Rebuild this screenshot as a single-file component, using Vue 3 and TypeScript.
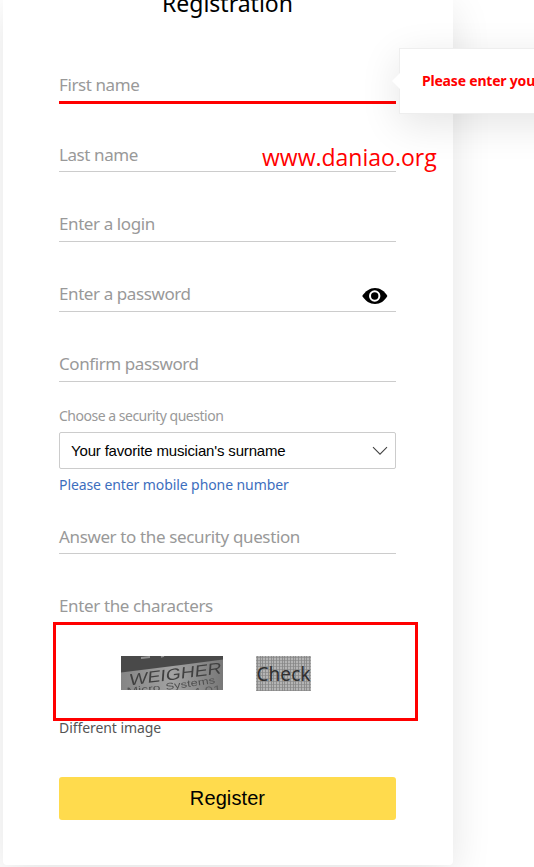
<script setup lang="ts">
interface Field {
  id: string
  label: string
  eye?: boolean
}

const fields: Field[] = [
  { id: 'first', label: 'First name' },
  { id: 'last', label: 'Last name' },
  { id: 'login', label: 'Enter a login' },
  { id: 'password', label: 'Enter a password', eye: true },
  { id: 'confirm', label: 'Confirm password' },
]
</script>

<template>
  <main class="page">
    <form class="card" @submit.prevent>
      <h1 class="title"><span>Registration</span></h1>

      <div v-for="f in fields" :key="f.id" class="field" :class="f.id">
        <span class="label">{{ f.label }}</span>
        <svg v-if="f.eye" class="eye" viewBox="0 0 26 18" width="26" height="18">
          <path d="M.2 9C3.500 4 7.800 1 13 1s9.500 3 12.400 8c-2.900 5-7.200 8-12.400 8S3.500 14 .2 9z" fill="#000" />
          <circle cx="12.700" cy="9" r="4.700" fill="#000" stroke="#fff" stroke-width="2" />
        </svg>
      </div>

      <span class="caption">Choose a security question</span>
      <div class="select">
        <span class="select-text">Your favorite musician's surname</span>
        <svg class="chevron" viewBox="0 0 16 10" width="16" height="10">
          <path d="M1 1.200l7 7 7-7" fill="none" stroke="#444" stroke-width="1.100" />
        </svg>
      </div>
      <a class="link">Please enter mobile phone number</a>

      <div class="field answer"><span class="label">Answer to the security question</span></div>

      <div class="chars"><span>Enter the characters</span></div>
      <div class="captcha">
        <svg class="captcha-one" viewBox="0 0 102 34" width="102" height="34">
          <defs>
            <linearGradient id="paper" x1="0" x2="1" y1="0" y2="0">
              <stop offset="0" stop-color="#858585" />
              <stop offset=".5" stop-color="#a2a2a2" />
              <stop offset="1" stop-color="#787878" />
            </linearGradient>
            <filter id="soft" x="0" y="0" width="1" height="1" filterUnits="objectBoundingBox"><feGaussianBlur stdDeviation=".4" /></filter>
          </defs>
          <rect width="102" height="34" fill="url(#paper)" />
          <path d="M0 0H102V3.500L60 9 0 16.500z" fill="#494949" />
          <g filter="url(#soft)">
            <path d="M20 2l9-1M40 1l3-1" stroke="#929292" stroke-width="1.800" />
            <g class="scan">
              <text transform="translate(8 29.500) rotate(-7.500) skewX(-12)" font-size="16" textLength="93" lengthAdjust="spacingAndGlyphs" fill="#404040">WEIGHER</text>
              <text transform="translate(6 38) rotate(-6)" font-size="9" textLength="34" lengthAdjust="spacingAndGlyphs" fill="#505050">Micro</text>
              <text transform="translate(45 34) rotate(-8)" font-size="9.500" textLength="50" lengthAdjust="spacingAndGlyphs" fill="#505050">Systems</text>
              <text transform="translate(72 39.500) rotate(-7)" font-size="10" textLength="29" lengthAdjust="spacingAndGlyphs" fill="#5c5c5c">4 01</text>
            </g>
          </g>
        </svg>
        <svg class="captcha-two" viewBox="0 0 55 35" width="55" height="35">
          <defs>
            <pattern id="weave" width="11" height="9" patternUnits="userSpaceOnUse">
              <path d="M1.500 0v9M4.500 0v9M6.500 0v9M9.500 0v9" stroke="#858585" stroke-width=".8" />
              <path d="M0 1.500h11M0 4.500h11M0 7.500h11" stroke="#858585" stroke-width=".6" />
            </pattern>
          </defs>
          <rect width="55" height="35" fill="#b4b4b4" />
          <rect width="55" height="35" fill="url(#weave)" />
          <text class="check" x=".5" y="24.500" font-size="20.500" textLength="54" lengthAdjust="spacingAndGlyphs" fill="#303030">Check</text>
        </svg>
      </div>
      <a class="different">Different image</a>
      <button class="submit" type="submit"><span>Register</span></button>
    </form>
    <div class="tooltip">Please enter your first name</div>
    <div class="watermark">www.daniao.org</div>
  </main>
</template>

<style>
body {
  overflow: hidden;
}
</style>

<style scoped>
.page {
  position: relative;
  box-sizing: border-box;
  width: 534px;
  height: 867px;
  padding-left: 3px;
  overflow: hidden;
  background: #fff;
  font-family: "Noto Sans", sans-serif;
}
.card {
  display: flex;
  flex-direction: column;
  box-sizing: border-box;
  width: 450px;
  height: 865px;
  padding: 0 57px 0 56px;
  border-radius: 0 0 4px 4px;
  background: #fff;
  box-shadow: 0 10px 40px rgba(0, 0, 0, .11);
}
.title {
  height: 34px;
  margin: 0;
  text-align: center;
  font-size: 23px;
  font-weight: 400;
  line-height: 34px;
}
.title span {
  display: block;
  margin-top: -14px;
}
.field {
  display: flex;
  flex: none;
  align-items: flex-end;
  justify-content: space-between;
  box-sizing: border-box;
  height: 70px;
  border-bottom: 1px solid #ccc;
  color: #999;
  font-size: 17px;
  letter-spacing: -.41px;
  line-height: 35px;
}
.field.first {
  border-bottom: 3px solid #f00;
  line-height: 32px;
}
.field.last {
  height: 68px;
  line-height: 33px;
}
.field.answer {
  letter-spacing: -.37px;
  line-height: 33px;
}
.eye {
  margin: 0 8px 6px 0;
}
.caption {
  height: 50px;
  color: #999;
  font-size: 14px;
  letter-spacing: -.49px;
  line-height: 68px;
}
.select {
  display: flex;
  flex: none;
  align-items: center;
  justify-content: space-between;
  box-sizing: border-box;
  height: 37px;
  padding: 0 7px 0 11px;
  border: 1px solid #ccc;
  border-radius: 2px;
  color: #000;
  font: 15px/35px "Liberation Sans", sans-serif;
  letter-spacing: -.17px;
}
.link {
  height: 15px;
  color: #3d6ebe;
  font-size: 14px;
  letter-spacing: -.09px;
  line-height: 31px;
}
.chars {
  height: 68px;
  color: #999;
  font-size: 17px;
  letter-spacing: -.37px;
  line-height: 104px;
}
.captcha {
  display: flex;
  flex: none;
  align-items: flex-start;
  gap: 33px;
  box-sizing: border-box;
  width: 365px;
  height: 99px;
  margin-left: -6px;
  padding: 31px 0 0 64.500px;
  border: 3px solid #f00;
}
.scan {
  font-family: "Liberation Sans", sans-serif;
}
.check {
  font-family: "Noto Sans", sans-serif;
}
.different {
  height: 56px;
  color: #555;
  font-size: 14px;
  letter-spacing: -.07px;
  line-height: 14px;
}
.submit {
  flex: none;
  height: 43px;
  padding: 0;
  border: 0;
  border-radius: 3px;
  background: #ffdb4d;
  color: #000;
  font: 20px/43px "Liberation Sans", sans-serif;
  letter-spacing: .1px;
}
.tooltip {
  position: absolute;
  top: 48px;
  left: 399px;
  box-sizing: border-box;
  width: 280px;
  height: 66px;
  padding-left: 22px;
  border: 1px solid #eee;
  background: #fff;
  box-shadow: 0 10px 40px rgba(0, 0, 0, .11);
  color: #f00;
  font-size: 14px;
  font-weight: 700;
  letter-spacing: -.2px;
  line-height: 63px;
  white-space: nowrap;
}
.tooltip::before {
  position: absolute;
  top: 24px;
  left: -8px;
  border: 8px solid transparent;
  border-right-color: #fff;
  border-left: 0;
  content: "";
}
.watermark {
  position: absolute;
  top: 140px;
  left: 262px;
  color: #f00;
  font: 23px/34px "Open Sans", sans-serif;
}
</style>
